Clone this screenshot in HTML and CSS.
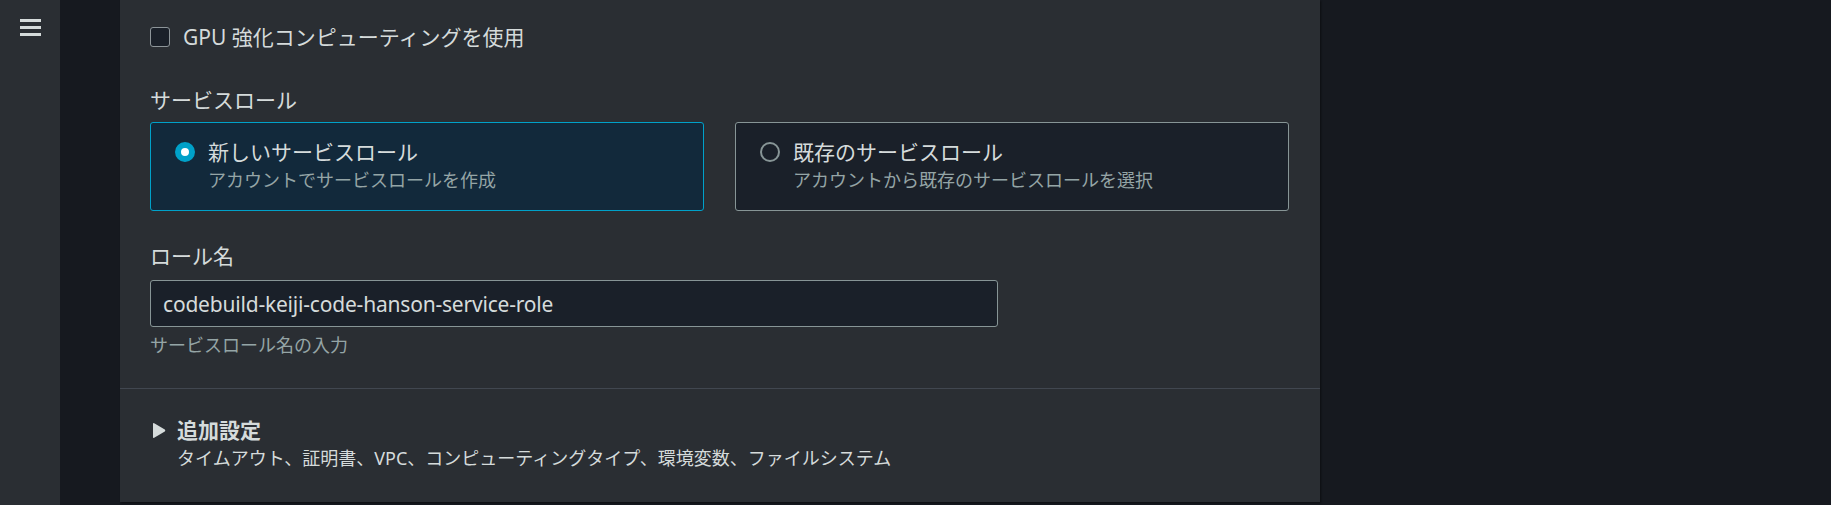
FILE: index.html
```html
<!DOCTYPE html>
<html lang="ja">
<head>
<meta charset="utf-8">
<title>CodeBuild</title>
<link rel="stylesheet" href="styles.css">
</head>
<body>
<div class="app">
  <nav class="sidebar">
    <button class="menu" aria-label="メニュー">
      <span class="bar"></span><span class="bar"></span><span class="bar"></span>
    </button>
  </nav>
  <div class="gutter"></div>
  <main class="panel">
    <section class="body">
      <label class="check-row">
        <span class="checkbox"></span>
        <span class="check-text">GPU 強化コンピューティングを使用</span>
      </label>

      <div class="field-label role-label">サービスロール</div>
      <div class="tiles">
        <div class="tile selected">
          <div class="tile-head">
            <span class="radio on"></span>
            <span class="tile-title">新しいサービスロール</span>
          </div>
          <div class="tile-desc">アカウントでサービスロールを作成</div>
        </div>
        <div class="tile">
          <div class="tile-head">
            <span class="radio"></span>
            <span class="tile-title">既存のサービスロール</span>
          </div>
          <div class="tile-desc">アカウントから既存のサービスロールを選択</div>
        </div>
      </div>

      <div class="field-label name-label">ロール名</div>
      <div class="input">codebuild-keiji-code-hanson-service-role</div>
      <div class="hint">サービスロール名の入力</div>
    </section>
    <section class="expand">
      <div class="expand-head">
        <svg class="caret" width="14" height="17" viewBox="0 0 14 17"><path d="M2.2 1.3 L12.8 7.6 Q13.8 8.5 12.8 9.4 L2.2 15.7 Q1 16.3 1 15 L1 2 Q1 0.7 2.2 1.3 Z" fill="#d5dbdb"/></svg>
        <span class="expand-title">追加設定</span>
      </div>
      <div class="expand-desc">タイムアウト、証明書、VPC、コンピューティングタイプ、環境変数、ファイルシステム</div>
    </section>
  </main>
</div>
</body>
</html>
```

FILE: styles.css
```css
* { box-sizing: border-box; }
html, body {
  margin: 0;
  padding: 0;
  background: #16191f;
  height: 505px;
  overflow: hidden;
}
body {
  font-family: "Noto Sans", "Noto Sans CJK JP", sans-serif;
  color: #d5dbdb;
}
.app {
  display: flex;
  height: 505px;
  align-items: flex-start;
}
.sidebar {
  width: 60px;
  height: 505px;
  background: #2a2e33;
  flex: none;
  padding-top: 19px;
}
.menu {
  display: flex;
  flex-direction: column;
  gap: 4.5px;
  background: none;
  border: 0;
  padding: 0;
  margin-left: 20px;
  width: 21px;
}
.bar {
  display: block;
  height: 2.5px;
  width: 21px;
  background: #d5dbdb;
}
.gutter {
  width: 60px;
  flex: none;
}
.panel {
  width: 1200px;
  height: 502px;
  background: #2a2e33;
  flex: none;
  box-shadow: 1px 1px 2px rgba(0, 0, 0, 0.45);
}
.body {
  padding: 22px 30px 29px;
  border-bottom: 1px solid #414750;
}
.check-row {
  display: flex;
  align-items: center;
  height: 30px;
}
.checkbox {
  width: 20px;
  height: 20px;
  border: 1.5px solid #8d9599;
  border-radius: 3px;
  background: #1a2029;
  flex: none;
}
.check-text {
  margin-left: 13px;
  font-size: 21px;
  line-height: 30px;
}
.field-label {
  font-size: 21px;
  line-height: 30px;
}
.role-label { margin-top: 33px; }
.tiles {
  display: grid;
  grid-template-columns: 554px 554px;
  column-gap: 31px;
  margin-top: 7px;
}
.tile {
  height: 89px;
  border: 1px solid #879596;
  border-radius: 3px;
  background: #1a2029;
  padding: 14px 0 0 24px;
}
.tile.selected {
  border-color: #00a1c9;
  background: #12293b;
}
.tile-head {
  display: flex;
  align-items: center;
  height: 30px;
}
.radio {
  width: 20px;
  height: 20px;
  border-radius: 50%;
  border: 2px solid #879596;
  flex: none;
}
.radio.on {
  border: 6px solid #00a1c9;
  background: #ffffff;
}
.tile-title {
  margin-left: 13px;
  font-size: 21px;
  line-height: 30px;
}
.tile-desc {
  margin-left: 33px;
  font-size: 18px;
  line-height: 27px;
  color: #95a5a6;
}
.name-label { margin-top: 30px; }
.input {
  width: 848px;
  height: 47px;
  margin-top: 9px;
  border: 1px solid #879596;
  border-radius: 3px;
  background: #1a2029;
  padding: 0 12px;
  display: flex;
  align-items: center;
  font-size: 21px;
  letter-spacing: -0.2px;
  color: #d5dbdb;
}
.hint {
  margin-top: 5px;
  font-size: 18px;
  line-height: 27px;
  color: #95a5a6;
}
.expand {
  padding: 26px 30px 0 32px;
}
.expand-head {
  display: flex;
  align-items: center;
  height: 30px;
}
.caret {
  flex: none;
}
.expand-title {
  margin-left: 11px;
  font-size: 21px;
  font-weight: 700;
  line-height: 30px;
}
.expand-desc {
  margin-left: 25px;
  font-size: 18px;
  line-height: 27px;
  color: #d5dbdb;
}
```
